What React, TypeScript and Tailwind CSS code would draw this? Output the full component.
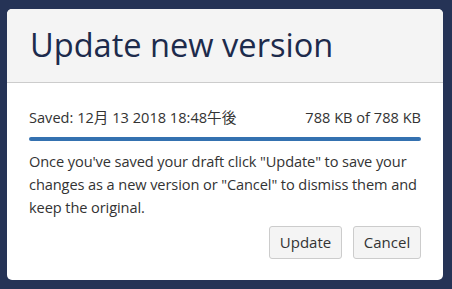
export default function App() {
  return (
    <div
      className="h-[289px] w-[452px] bg-[#253356] pl-[7px] pt-[9px]"
      style={{ fontFamily: '"Open Sans", "Noto Sans CJK JP", sans-serif' }}
    >
      <div className="flex h-[271px] w-[436px] flex-col overflow-hidden rounded-[5px] bg-white">
        <header className="flex h-[74px] items-center border-b border-[#cccccc] bg-[#f4f4f4] px-[23px]">
          <h1 className="text-[32.6px] leading-none text-[#1d2b4c]">Update new version</h1>
        </header>

        <div className="flex flex-1 flex-col px-[22px] pt-[24px] text-[14.6px] text-[#333333]">
          <div className="flex justify-between leading-[20px]">
            <span>Saved: 12月 13 2018 18:48午後</span>
            <span>788 KB of 788 KB</span>
          </div>
          <div className="mt-[10px] h-[4px] rounded-full bg-[#3471b0]" />
          <p className="-mr-[8px] mt-[9px] leading-[23px] tracking-[-0.1px]">
            Once you've saved your draft click "Update" to save your changes as a new version or
            "Cancel" to dismiss them and keep the original.
          </p>
          <div className="mt-[7px] flex justify-end gap-[11px]">
            <button className="h-[33px] w-[73px] rounded-[3px] border border-[#cccccc] bg-[#f4f4f4] text-[15px] text-[#333333]">
              Update
            </button>
            <button className="h-[33px] w-[68px] rounded-[3px] border border-[#cccccc] bg-[#f4f4f4] text-[15px] text-[#333333]">
              Cancel
            </button>
          </div>
        </div>
      </div>
    </div>
  );
}
